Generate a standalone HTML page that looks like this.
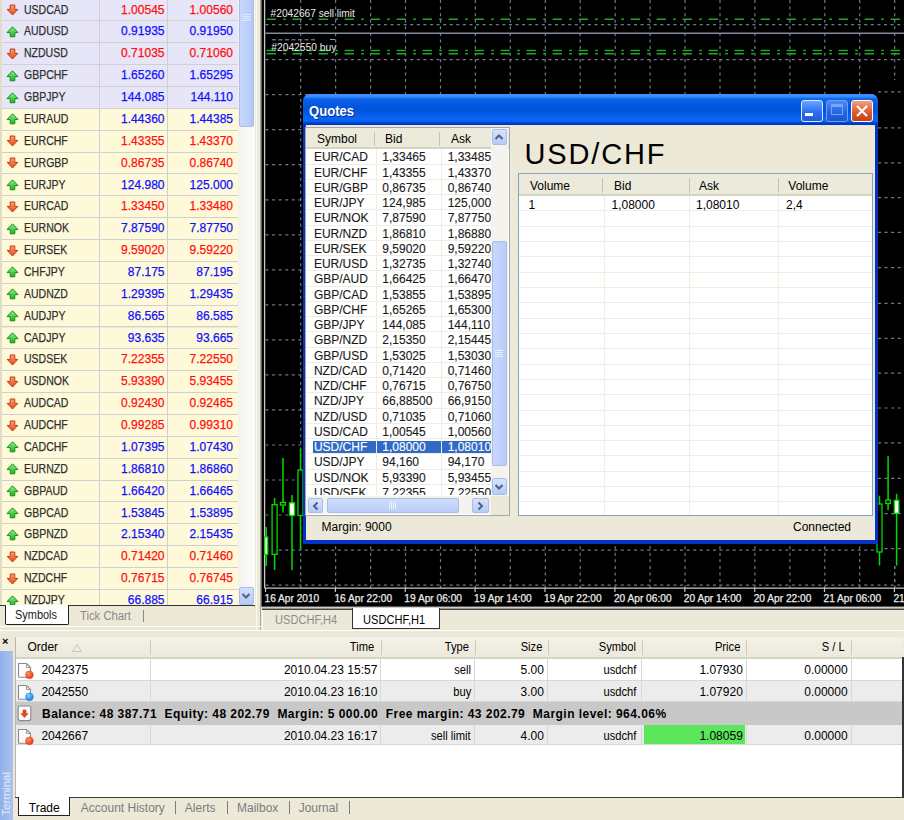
<!DOCTYPE html>
<html><head><meta charset="utf-8"><title>MT</title>
<style>
*{margin:0;padding:0;box-sizing:border-box}
html,body{width:904px;height:820px;overflow:hidden;background:#ece9d8;font-family:"Liberation Sans",sans-serif;font-size:12px;color:#000}
.ab{position:absolute}
.t{position:absolute;white-space:nowrap;line-height:1}
.sl{transform:scaleX(.875);transform-origin:0 0}
.k{-webkit-text-stroke:0.25px currentColor}
.k2{-webkit-text-stroke:0.12px currentColor}
</style></head><body>

<div class="ab" style="left:0;top:0;width:262px;height:632px;background:#ece9d8;overflow:hidden">
<div class="ab" style="left:0;top:0;width:2px;height:605px;background:#e2ddc8"></div>
<div class="ab" style="left:2px;top:0;width:236px;height:605px;overflow:hidden">
<div class="ab" style="left:0;top:-0.55px;width:236px;height:21.87px;background:#e6e6f8;border-bottom:1.2px solid #d0d0d2">
<svg class="ab" style="left:4.2px;top:4.6px" width="13" height="12" viewBox="0 0 13 12"><defs><linearGradient id="gd" x1="0" y1="0" x2="0" y2="1"><stop offset="0" stop-color="#ffa070"/><stop offset="1" stop-color="#e04818"/></linearGradient></defs><path d="M6.5 11 L11.8 5.4 L8.8 5.4 L8.8 1 L4.2 1 L4.2 5.4 L1.2 5.4 Z" fill="url(#gd)" stroke="#c43a12" stroke-width="1"/></svg>
<span class="t sl k" style="left:21.8px;top:4.1px;color:#303030">USDCAD</span>
<span class="t k" style="right:73.5px;top:4.1px;color:#ff1010">1.00545</span>
<span class="t k" style="right:5px;top:4.1px;color:#ff1010">1.00560</span>
</div>
<div class="ab" style="left:0;top:21.32px;width:236px;height:21.87px;background:#e6e6f8;border-bottom:1.2px solid #d0d0d2">
<svg class="ab" style="left:4.2px;top:4.6px" width="13" height="12" viewBox="0 0 13 12"><defs><linearGradient id="gu" x1="0" y1="0" x2="0" y2="1"><stop offset="0" stop-color="#8cf08c"/><stop offset="1" stop-color="#20b020"/></linearGradient></defs><path d="M6.5 0.8 L12 6.6 L8.8 6.6 L8.8 10.8 L4.2 10.8 L4.2 6.6 L1 6.6 Z" fill="url(#gu)" stroke="#15901a" stroke-width="1"/></svg>
<span class="t sl k" style="left:21.8px;top:4.1px;color:#303030">AUDUSD</span>
<span class="t k" style="right:73.5px;top:4.1px;color:#1010ff">0.91935</span>
<span class="t k" style="right:5px;top:4.1px;color:#1010ff">0.91950</span>
</div>
<div class="ab" style="left:0;top:43.19px;width:236px;height:21.87px;background:#e6e6f8;border-bottom:1.2px solid #d0d0d2">
<svg class="ab" style="left:4.2px;top:4.6px" width="13" height="12" viewBox="0 0 13 12"><defs><linearGradient id="gd" x1="0" y1="0" x2="0" y2="1"><stop offset="0" stop-color="#ffa070"/><stop offset="1" stop-color="#e04818"/></linearGradient></defs><path d="M6.5 11 L11.8 5.4 L8.8 5.4 L8.8 1 L4.2 1 L4.2 5.4 L1.2 5.4 Z" fill="url(#gd)" stroke="#c43a12" stroke-width="1"/></svg>
<span class="t sl k" style="left:21.8px;top:4.1px;color:#303030">NZDUSD</span>
<span class="t k" style="right:73.5px;top:4.1px;color:#ff1010">0.71035</span>
<span class="t k" style="right:5px;top:4.1px;color:#ff1010">0.71060</span>
</div>
<div class="ab" style="left:0;top:65.06px;width:236px;height:21.87px;background:#e6e6f8;border-bottom:1.2px solid #d0d0d2">
<svg class="ab" style="left:4.2px;top:4.6px" width="13" height="12" viewBox="0 0 13 12"><defs><linearGradient id="gu" x1="0" y1="0" x2="0" y2="1"><stop offset="0" stop-color="#8cf08c"/><stop offset="1" stop-color="#20b020"/></linearGradient></defs><path d="M6.5 0.8 L12 6.6 L8.8 6.6 L8.8 10.8 L4.2 10.8 L4.2 6.6 L1 6.6 Z" fill="url(#gu)" stroke="#15901a" stroke-width="1"/></svg>
<span class="t sl k" style="left:21.8px;top:4.1px;color:#303030">GBPCHF</span>
<span class="t k" style="right:73.5px;top:4.1px;color:#1010ff">1.65260</span>
<span class="t k" style="right:5px;top:4.1px;color:#1010ff">1.65295</span>
</div>
<div class="ab" style="left:0;top:86.93px;width:236px;height:21.87px;background:#e6e6f8;border-bottom:1.2px solid #d0d0d2">
<svg class="ab" style="left:4.2px;top:4.6px" width="13" height="12" viewBox="0 0 13 12"><defs><linearGradient id="gu" x1="0" y1="0" x2="0" y2="1"><stop offset="0" stop-color="#8cf08c"/><stop offset="1" stop-color="#20b020"/></linearGradient></defs><path d="M6.5 0.8 L12 6.6 L8.8 6.6 L8.8 10.8 L4.2 10.8 L4.2 6.6 L1 6.6 Z" fill="url(#gu)" stroke="#15901a" stroke-width="1"/></svg>
<span class="t sl k" style="left:21.8px;top:4.1px;color:#303030">GBPJPY</span>
<span class="t k" style="right:73.5px;top:4.1px;color:#1010ff">144.085</span>
<span class="t k" style="right:5px;top:4.1px;color:#1010ff">144.110</span>
</div>
<div class="ab" style="left:0;top:108.80px;width:236px;height:21.87px;background:#fefad9;border-bottom:1.2px solid #d0d0d2">
<svg class="ab" style="left:4.2px;top:4.6px" width="13" height="12" viewBox="0 0 13 12"><defs><linearGradient id="gu" x1="0" y1="0" x2="0" y2="1"><stop offset="0" stop-color="#8cf08c"/><stop offset="1" stop-color="#20b020"/></linearGradient></defs><path d="M6.5 0.8 L12 6.6 L8.8 6.6 L8.8 10.8 L4.2 10.8 L4.2 6.6 L1 6.6 Z" fill="url(#gu)" stroke="#15901a" stroke-width="1"/></svg>
<span class="t sl k" style="left:21.8px;top:4.1px;color:#303030">EURAUD</span>
<span class="t k" style="right:73.5px;top:4.1px;color:#1010ff">1.44360</span>
<span class="t k" style="right:5px;top:4.1px;color:#1010ff">1.44385</span>
</div>
<div class="ab" style="left:0;top:130.67px;width:236px;height:21.87px;background:#fefad9;border-bottom:1.2px solid #d0d0d2">
<svg class="ab" style="left:4.2px;top:4.6px" width="13" height="12" viewBox="0 0 13 12"><defs><linearGradient id="gd" x1="0" y1="0" x2="0" y2="1"><stop offset="0" stop-color="#ffa070"/><stop offset="1" stop-color="#e04818"/></linearGradient></defs><path d="M6.5 11 L11.8 5.4 L8.8 5.4 L8.8 1 L4.2 1 L4.2 5.4 L1.2 5.4 Z" fill="url(#gd)" stroke="#c43a12" stroke-width="1"/></svg>
<span class="t sl k" style="left:21.8px;top:4.1px;color:#303030">EURCHF</span>
<span class="t k" style="right:73.5px;top:4.1px;color:#ff1010">1.43355</span>
<span class="t k" style="right:5px;top:4.1px;color:#ff1010">1.43370</span>
</div>
<div class="ab" style="left:0;top:152.54px;width:236px;height:21.87px;background:#fefad9;border-bottom:1.2px solid #d0d0d2">
<svg class="ab" style="left:4.2px;top:4.6px" width="13" height="12" viewBox="0 0 13 12"><defs><linearGradient id="gd" x1="0" y1="0" x2="0" y2="1"><stop offset="0" stop-color="#ffa070"/><stop offset="1" stop-color="#e04818"/></linearGradient></defs><path d="M6.5 11 L11.8 5.4 L8.8 5.4 L8.8 1 L4.2 1 L4.2 5.4 L1.2 5.4 Z" fill="url(#gd)" stroke="#c43a12" stroke-width="1"/></svg>
<span class="t sl k" style="left:21.8px;top:4.1px;color:#303030">EURGBP</span>
<span class="t k" style="right:73.5px;top:4.1px;color:#ff1010">0.86735</span>
<span class="t k" style="right:5px;top:4.1px;color:#ff1010">0.86740</span>
</div>
<div class="ab" style="left:0;top:174.41px;width:236px;height:21.87px;background:#fefad9;border-bottom:1.2px solid #d0d0d2">
<svg class="ab" style="left:4.2px;top:4.6px" width="13" height="12" viewBox="0 0 13 12"><defs><linearGradient id="gu" x1="0" y1="0" x2="0" y2="1"><stop offset="0" stop-color="#8cf08c"/><stop offset="1" stop-color="#20b020"/></linearGradient></defs><path d="M6.5 0.8 L12 6.6 L8.8 6.6 L8.8 10.8 L4.2 10.8 L4.2 6.6 L1 6.6 Z" fill="url(#gu)" stroke="#15901a" stroke-width="1"/></svg>
<span class="t sl k" style="left:21.8px;top:4.1px;color:#303030">EURJPY</span>
<span class="t k" style="right:73.5px;top:4.1px;color:#1010ff">124.980</span>
<span class="t k" style="right:5px;top:4.1px;color:#1010ff">125.000</span>
</div>
<div class="ab" style="left:0;top:196.28px;width:236px;height:21.87px;background:#fefad9;border-bottom:1.2px solid #d0d0d2">
<svg class="ab" style="left:4.2px;top:4.6px" width="13" height="12" viewBox="0 0 13 12"><defs><linearGradient id="gd" x1="0" y1="0" x2="0" y2="1"><stop offset="0" stop-color="#ffa070"/><stop offset="1" stop-color="#e04818"/></linearGradient></defs><path d="M6.5 11 L11.8 5.4 L8.8 5.4 L8.8 1 L4.2 1 L4.2 5.4 L1.2 5.4 Z" fill="url(#gd)" stroke="#c43a12" stroke-width="1"/></svg>
<span class="t sl k" style="left:21.8px;top:4.1px;color:#303030">EURCAD</span>
<span class="t k" style="right:73.5px;top:4.1px;color:#ff1010">1.33450</span>
<span class="t k" style="right:5px;top:4.1px;color:#ff1010">1.33480</span>
</div>
<div class="ab" style="left:0;top:218.15px;width:236px;height:21.87px;background:#fefad9;border-bottom:1.2px solid #d0d0d2">
<svg class="ab" style="left:4.2px;top:4.6px" width="13" height="12" viewBox="0 0 13 12"><defs><linearGradient id="gu" x1="0" y1="0" x2="0" y2="1"><stop offset="0" stop-color="#8cf08c"/><stop offset="1" stop-color="#20b020"/></linearGradient></defs><path d="M6.5 0.8 L12 6.6 L8.8 6.6 L8.8 10.8 L4.2 10.8 L4.2 6.6 L1 6.6 Z" fill="url(#gu)" stroke="#15901a" stroke-width="1"/></svg>
<span class="t sl k" style="left:21.8px;top:4.1px;color:#303030">EURNOK</span>
<span class="t k" style="right:73.5px;top:4.1px;color:#1010ff">7.87590</span>
<span class="t k" style="right:5px;top:4.1px;color:#1010ff">7.87750</span>
</div>
<div class="ab" style="left:0;top:240.02px;width:236px;height:21.87px;background:#fefad9;border-bottom:1.2px solid #d0d0d2">
<svg class="ab" style="left:4.2px;top:4.6px" width="13" height="12" viewBox="0 0 13 12"><defs><linearGradient id="gd" x1="0" y1="0" x2="0" y2="1"><stop offset="0" stop-color="#ffa070"/><stop offset="1" stop-color="#e04818"/></linearGradient></defs><path d="M6.5 11 L11.8 5.4 L8.8 5.4 L8.8 1 L4.2 1 L4.2 5.4 L1.2 5.4 Z" fill="url(#gd)" stroke="#c43a12" stroke-width="1"/></svg>
<span class="t sl k" style="left:21.8px;top:4.1px;color:#303030">EURSEK</span>
<span class="t k" style="right:73.5px;top:4.1px;color:#ff1010">9.59020</span>
<span class="t k" style="right:5px;top:4.1px;color:#ff1010">9.59220</span>
</div>
<div class="ab" style="left:0;top:261.89px;width:236px;height:21.87px;background:#fefad9;border-bottom:1.2px solid #d0d0d2">
<svg class="ab" style="left:4.2px;top:4.6px" width="13" height="12" viewBox="0 0 13 12"><defs><linearGradient id="gu" x1="0" y1="0" x2="0" y2="1"><stop offset="0" stop-color="#8cf08c"/><stop offset="1" stop-color="#20b020"/></linearGradient></defs><path d="M6.5 0.8 L12 6.6 L8.8 6.6 L8.8 10.8 L4.2 10.8 L4.2 6.6 L1 6.6 Z" fill="url(#gu)" stroke="#15901a" stroke-width="1"/></svg>
<span class="t sl k" style="left:21.8px;top:4.1px;color:#303030">CHFJPY</span>
<span class="t k" style="right:73.5px;top:4.1px;color:#1010ff">87.175</span>
<span class="t k" style="right:5px;top:4.1px;color:#1010ff">87.195</span>
</div>
<div class="ab" style="left:0;top:283.76px;width:236px;height:21.87px;background:#fefad9;border-bottom:1.2px solid #d0d0d2">
<svg class="ab" style="left:4.2px;top:4.6px" width="13" height="12" viewBox="0 0 13 12"><defs><linearGradient id="gu" x1="0" y1="0" x2="0" y2="1"><stop offset="0" stop-color="#8cf08c"/><stop offset="1" stop-color="#20b020"/></linearGradient></defs><path d="M6.5 0.8 L12 6.6 L8.8 6.6 L8.8 10.8 L4.2 10.8 L4.2 6.6 L1 6.6 Z" fill="url(#gu)" stroke="#15901a" stroke-width="1"/></svg>
<span class="t sl k" style="left:21.8px;top:4.1px;color:#303030">AUDNZD</span>
<span class="t k" style="right:73.5px;top:4.1px;color:#1010ff">1.29395</span>
<span class="t k" style="right:5px;top:4.1px;color:#1010ff">1.29435</span>
</div>
<div class="ab" style="left:0;top:305.63px;width:236px;height:21.87px;background:#fefad9;border-bottom:1.2px solid #d0d0d2">
<svg class="ab" style="left:4.2px;top:4.6px" width="13" height="12" viewBox="0 0 13 12"><defs><linearGradient id="gu" x1="0" y1="0" x2="0" y2="1"><stop offset="0" stop-color="#8cf08c"/><stop offset="1" stop-color="#20b020"/></linearGradient></defs><path d="M6.5 0.8 L12 6.6 L8.8 6.6 L8.8 10.8 L4.2 10.8 L4.2 6.6 L1 6.6 Z" fill="url(#gu)" stroke="#15901a" stroke-width="1"/></svg>
<span class="t sl k" style="left:21.8px;top:4.1px;color:#303030">AUDJPY</span>
<span class="t k" style="right:73.5px;top:4.1px;color:#1010ff">86.565</span>
<span class="t k" style="right:5px;top:4.1px;color:#1010ff">86.585</span>
</div>
<div class="ab" style="left:0;top:327.50px;width:236px;height:21.87px;background:#fefad9;border-bottom:1.2px solid #d0d0d2">
<svg class="ab" style="left:4.2px;top:4.6px" width="13" height="12" viewBox="0 0 13 12"><defs><linearGradient id="gu" x1="0" y1="0" x2="0" y2="1"><stop offset="0" stop-color="#8cf08c"/><stop offset="1" stop-color="#20b020"/></linearGradient></defs><path d="M6.5 0.8 L12 6.6 L8.8 6.6 L8.8 10.8 L4.2 10.8 L4.2 6.6 L1 6.6 Z" fill="url(#gu)" stroke="#15901a" stroke-width="1"/></svg>
<span class="t sl k" style="left:21.8px;top:4.1px;color:#303030">CADJPY</span>
<span class="t k" style="right:73.5px;top:4.1px;color:#1010ff">93.635</span>
<span class="t k" style="right:5px;top:4.1px;color:#1010ff">93.665</span>
</div>
<div class="ab" style="left:0;top:349.37px;width:236px;height:21.87px;background:#fefad9;border-bottom:1.2px solid #d0d0d2">
<svg class="ab" style="left:4.2px;top:4.6px" width="13" height="12" viewBox="0 0 13 12"><defs><linearGradient id="gd" x1="0" y1="0" x2="0" y2="1"><stop offset="0" stop-color="#ffa070"/><stop offset="1" stop-color="#e04818"/></linearGradient></defs><path d="M6.5 11 L11.8 5.4 L8.8 5.4 L8.8 1 L4.2 1 L4.2 5.4 L1.2 5.4 Z" fill="url(#gd)" stroke="#c43a12" stroke-width="1"/></svg>
<span class="t sl k" style="left:21.8px;top:4.1px;color:#303030">USDSEK</span>
<span class="t k" style="right:73.5px;top:4.1px;color:#ff1010">7.22355</span>
<span class="t k" style="right:5px;top:4.1px;color:#ff1010">7.22550</span>
</div>
<div class="ab" style="left:0;top:371.24px;width:236px;height:21.87px;background:#fefad9;border-bottom:1.2px solid #d0d0d2">
<svg class="ab" style="left:4.2px;top:4.6px" width="13" height="12" viewBox="0 0 13 12"><defs><linearGradient id="gd" x1="0" y1="0" x2="0" y2="1"><stop offset="0" stop-color="#ffa070"/><stop offset="1" stop-color="#e04818"/></linearGradient></defs><path d="M6.5 11 L11.8 5.4 L8.8 5.4 L8.8 1 L4.2 1 L4.2 5.4 L1.2 5.4 Z" fill="url(#gd)" stroke="#c43a12" stroke-width="1"/></svg>
<span class="t sl k" style="left:21.8px;top:4.1px;color:#303030">USDNOK</span>
<span class="t k" style="right:73.5px;top:4.1px;color:#ff1010">5.93390</span>
<span class="t k" style="right:5px;top:4.1px;color:#ff1010">5.93455</span>
</div>
<div class="ab" style="left:0;top:393.11px;width:236px;height:21.87px;background:#fefad9;border-bottom:1.2px solid #d0d0d2">
<svg class="ab" style="left:4.2px;top:4.6px" width="13" height="12" viewBox="0 0 13 12"><defs><linearGradient id="gd" x1="0" y1="0" x2="0" y2="1"><stop offset="0" stop-color="#ffa070"/><stop offset="1" stop-color="#e04818"/></linearGradient></defs><path d="M6.5 11 L11.8 5.4 L8.8 5.4 L8.8 1 L4.2 1 L4.2 5.4 L1.2 5.4 Z" fill="url(#gd)" stroke="#c43a12" stroke-width="1"/></svg>
<span class="t sl k" style="left:21.8px;top:4.1px;color:#303030">AUDCAD</span>
<span class="t k" style="right:73.5px;top:4.1px;color:#ff1010">0.92430</span>
<span class="t k" style="right:5px;top:4.1px;color:#ff1010">0.92465</span>
</div>
<div class="ab" style="left:0;top:414.98px;width:236px;height:21.87px;background:#fefad9;border-bottom:1.2px solid #d0d0d2">
<svg class="ab" style="left:4.2px;top:4.6px" width="13" height="12" viewBox="0 0 13 12"><defs><linearGradient id="gd" x1="0" y1="0" x2="0" y2="1"><stop offset="0" stop-color="#ffa070"/><stop offset="1" stop-color="#e04818"/></linearGradient></defs><path d="M6.5 11 L11.8 5.4 L8.8 5.4 L8.8 1 L4.2 1 L4.2 5.4 L1.2 5.4 Z" fill="url(#gd)" stroke="#c43a12" stroke-width="1"/></svg>
<span class="t sl k" style="left:21.8px;top:4.1px;color:#303030">AUDCHF</span>
<span class="t k" style="right:73.5px;top:4.1px;color:#ff1010">0.99285</span>
<span class="t k" style="right:5px;top:4.1px;color:#ff1010">0.99310</span>
</div>
<div class="ab" style="left:0;top:436.85px;width:236px;height:21.87px;background:#fefad9;border-bottom:1.2px solid #d0d0d2">
<svg class="ab" style="left:4.2px;top:4.6px" width="13" height="12" viewBox="0 0 13 12"><defs><linearGradient id="gu" x1="0" y1="0" x2="0" y2="1"><stop offset="0" stop-color="#8cf08c"/><stop offset="1" stop-color="#20b020"/></linearGradient></defs><path d="M6.5 0.8 L12 6.6 L8.8 6.6 L8.8 10.8 L4.2 10.8 L4.2 6.6 L1 6.6 Z" fill="url(#gu)" stroke="#15901a" stroke-width="1"/></svg>
<span class="t sl k" style="left:21.8px;top:4.1px;color:#303030">CADCHF</span>
<span class="t k" style="right:73.5px;top:4.1px;color:#1010ff">1.07395</span>
<span class="t k" style="right:5px;top:4.1px;color:#1010ff">1.07430</span>
</div>
<div class="ab" style="left:0;top:458.72px;width:236px;height:21.87px;background:#fefad9;border-bottom:1.2px solid #d0d0d2">
<svg class="ab" style="left:4.2px;top:4.6px" width="13" height="12" viewBox="0 0 13 12"><defs><linearGradient id="gu" x1="0" y1="0" x2="0" y2="1"><stop offset="0" stop-color="#8cf08c"/><stop offset="1" stop-color="#20b020"/></linearGradient></defs><path d="M6.5 0.8 L12 6.6 L8.8 6.6 L8.8 10.8 L4.2 10.8 L4.2 6.6 L1 6.6 Z" fill="url(#gu)" stroke="#15901a" stroke-width="1"/></svg>
<span class="t sl k" style="left:21.8px;top:4.1px;color:#303030">EURNZD</span>
<span class="t k" style="right:73.5px;top:4.1px;color:#1010ff">1.86810</span>
<span class="t k" style="right:5px;top:4.1px;color:#1010ff">1.86860</span>
</div>
<div class="ab" style="left:0;top:480.59px;width:236px;height:21.87px;background:#fefad9;border-bottom:1.2px solid #d0d0d2">
<svg class="ab" style="left:4.2px;top:4.6px" width="13" height="12" viewBox="0 0 13 12"><defs><linearGradient id="gu" x1="0" y1="0" x2="0" y2="1"><stop offset="0" stop-color="#8cf08c"/><stop offset="1" stop-color="#20b020"/></linearGradient></defs><path d="M6.5 0.8 L12 6.6 L8.8 6.6 L8.8 10.8 L4.2 10.8 L4.2 6.6 L1 6.6 Z" fill="url(#gu)" stroke="#15901a" stroke-width="1"/></svg>
<span class="t sl k" style="left:21.8px;top:4.1px;color:#303030">GBPAUD</span>
<span class="t k" style="right:73.5px;top:4.1px;color:#1010ff">1.66420</span>
<span class="t k" style="right:5px;top:4.1px;color:#1010ff">1.66465</span>
</div>
<div class="ab" style="left:0;top:502.46px;width:236px;height:21.87px;background:#fefad9;border-bottom:1.2px solid #d0d0d2">
<svg class="ab" style="left:4.2px;top:4.6px" width="13" height="12" viewBox="0 0 13 12"><defs><linearGradient id="gu" x1="0" y1="0" x2="0" y2="1"><stop offset="0" stop-color="#8cf08c"/><stop offset="1" stop-color="#20b020"/></linearGradient></defs><path d="M6.5 0.8 L12 6.6 L8.8 6.6 L8.8 10.8 L4.2 10.8 L4.2 6.6 L1 6.6 Z" fill="url(#gu)" stroke="#15901a" stroke-width="1"/></svg>
<span class="t sl k" style="left:21.8px;top:4.1px;color:#303030">GBPCAD</span>
<span class="t k" style="right:73.5px;top:4.1px;color:#1010ff">1.53845</span>
<span class="t k" style="right:5px;top:4.1px;color:#1010ff">1.53895</span>
</div>
<div class="ab" style="left:0;top:524.33px;width:236px;height:21.87px;background:#fefad9;border-bottom:1.2px solid #d0d0d2">
<svg class="ab" style="left:4.2px;top:4.6px" width="13" height="12" viewBox="0 0 13 12"><defs><linearGradient id="gu" x1="0" y1="0" x2="0" y2="1"><stop offset="0" stop-color="#8cf08c"/><stop offset="1" stop-color="#20b020"/></linearGradient></defs><path d="M6.5 0.8 L12 6.6 L8.8 6.6 L8.8 10.8 L4.2 10.8 L4.2 6.6 L1 6.6 Z" fill="url(#gu)" stroke="#15901a" stroke-width="1"/></svg>
<span class="t sl k" style="left:21.8px;top:4.1px;color:#303030">GBPNZD</span>
<span class="t k" style="right:73.5px;top:4.1px;color:#1010ff">2.15340</span>
<span class="t k" style="right:5px;top:4.1px;color:#1010ff">2.15435</span>
</div>
<div class="ab" style="left:0;top:546.20px;width:236px;height:21.87px;background:#fefad9;border-bottom:1.2px solid #d0d0d2">
<svg class="ab" style="left:4.2px;top:4.6px" width="13" height="12" viewBox="0 0 13 12"><defs><linearGradient id="gd" x1="0" y1="0" x2="0" y2="1"><stop offset="0" stop-color="#ffa070"/><stop offset="1" stop-color="#e04818"/></linearGradient></defs><path d="M6.5 11 L11.8 5.4 L8.8 5.4 L8.8 1 L4.2 1 L4.2 5.4 L1.2 5.4 Z" fill="url(#gd)" stroke="#c43a12" stroke-width="1"/></svg>
<span class="t sl k" style="left:21.8px;top:4.1px;color:#303030">NZDCAD</span>
<span class="t k" style="right:73.5px;top:4.1px;color:#ff1010">0.71420</span>
<span class="t k" style="right:5px;top:4.1px;color:#ff1010">0.71460</span>
</div>
<div class="ab" style="left:0;top:568.07px;width:236px;height:21.87px;background:#fefad9;border-bottom:1.2px solid #d0d0d2">
<svg class="ab" style="left:4.2px;top:4.6px" width="13" height="12" viewBox="0 0 13 12"><defs><linearGradient id="gd" x1="0" y1="0" x2="0" y2="1"><stop offset="0" stop-color="#ffa070"/><stop offset="1" stop-color="#e04818"/></linearGradient></defs><path d="M6.5 11 L11.8 5.4 L8.8 5.4 L8.8 1 L4.2 1 L4.2 5.4 L1.2 5.4 Z" fill="url(#gd)" stroke="#c43a12" stroke-width="1"/></svg>
<span class="t sl k" style="left:21.8px;top:4.1px;color:#303030">NZDCHF</span>
<span class="t k" style="right:73.5px;top:4.1px;color:#ff1010">0.76715</span>
<span class="t k" style="right:5px;top:4.1px;color:#ff1010">0.76745</span>
</div>
<div class="ab" style="left:0;top:589.94px;width:236px;height:21.87px;background:#fefad9;border-bottom:1.2px solid #d0d0d2">
<svg class="ab" style="left:4.2px;top:4.6px" width="13" height="12" viewBox="0 0 13 12"><defs><linearGradient id="gu" x1="0" y1="0" x2="0" y2="1"><stop offset="0" stop-color="#8cf08c"/><stop offset="1" stop-color="#20b020"/></linearGradient></defs><path d="M6.5 0.8 L12 6.6 L8.8 6.6 L8.8 10.8 L4.2 10.8 L4.2 6.6 L1 6.6 Z" fill="url(#gu)" stroke="#15901a" stroke-width="1"/></svg>
<span class="t sl k" style="left:21.8px;top:4.1px;color:#303030">NZDJPY</span>
<span class="t k" style="right:73.5px;top:4.1px;color:#1010ff">66.885</span>
<span class="t k" style="right:5px;top:4.1px;color:#1010ff">66.915</span>
</div>
<div class="ab" style="left:96.8px;top:0;width:1.4px;height:605px;background:#d0d0d2"></div>
<div class="ab" style="left:164.6px;top:0;width:1.4px;height:605px;background:#d0d0d2"></div>
</div>
<div class="ab" style="left:237.5px;top:0;width:17px;height:605px;background:linear-gradient(90deg,#f3f2ec,#fdfdfb)"></div>
<div class="ab" style="left:255.6px;top:0;width:1px;height:630px;background:#fbfaf4"></div>
<div class="ab" style="left:259.8px;top:0;width:1.4px;height:631px;background:#a9a89e"></div>
<div class="ab" style="left:238.5px;top:-2px;width:15px;height:129px;background:linear-gradient(90deg,#c8d8fb,#bcd0fa 60%,#b0c6f6);border:1px solid #a9bde8;border-radius:2px"></div>
<div class="ab" style="left:242.5px;top:13.5px;width:8px;height:1px;background:#e0e9fd;box-shadow:0 2px 0 #e0e9fd,0 4px 0 #e0e9fd,0 6px 0 #e0e9fd"></div>
<div class="ab" style="left:238.5px;top:587px;width:15px;height:17.5px;background:linear-gradient(180deg,#d2e0fd,#b4c9f6);border:1px solid #a9bde8;border-radius:2px"></div>
<svg class="ab" style="left:241px;top:591.5px" width="10" height="8" viewBox="0 0 10 8"><path d="M1.5 2 L5 5.5 L8.5 2" stroke="#4d6185" stroke-width="2" fill="none"/></svg>
<div class="ab" style="left:0;top:605px;width:255px;height:1px;background:#333"></div>
<div class="ab" style="left:4.5px;top:605px;width:64px;height:19.5px;background:#fff;border:1px solid #222;border-top:none;border-radius:0 0 2px 2px"></div>
<span class="t" style="left:15px;top:609px;font-size:12px;color:#222;transform:scaleX(.913);transform-origin:0 0">Symbols</span>
<span class="t" style="left:79.6px;top:610px;font-size:12px;color:#8a8a8a;transform:scaleX(.94);transform-origin:0 0">Tick Chart</span>
<div class="ab" style="left:143px;top:610px;width:1px;height:12px;background:#8a8a8a"></div>
</div>
<svg class="ab" style="left:0;top:0" width="904" height="610" viewBox="0 0 904 610">
<rect x="261.4" y="0" width="643" height="606.8" fill="#000"/>
<line x1="264.6" y1="0" x2="264.6" y2="588" stroke="#c8c8c8" stroke-width="1.3"/>
<line x1="265.5" y1="24.6" x2="904" y2="24.6" stroke="#6e7b89" stroke-width="1.2" stroke-dasharray="3 3.58"/>
<line x1="265.5" y1="59.6" x2="904" y2="59.6" stroke="#6e7b89" stroke-width="1.2" stroke-dasharray="3 3.58"/>
<line x1="265.5" y1="94.7" x2="904" y2="94.7" stroke="#6e7b89" stroke-width="1.2" stroke-dasharray="3 3.58"/>
<line x1="265.5" y1="129.7" x2="904" y2="129.7" stroke="#6e7b89" stroke-width="1.2" stroke-dasharray="3 3.58"/>
<line x1="265.5" y1="164.7" x2="904" y2="164.7" stroke="#6e7b89" stroke-width="1.2" stroke-dasharray="3 3.58"/>
<line x1="265.5" y1="199.8" x2="904" y2="199.8" stroke="#6e7b89" stroke-width="1.2" stroke-dasharray="3 3.58"/>
<line x1="265.5" y1="234.8" x2="904" y2="234.8" stroke="#6e7b89" stroke-width="1.2" stroke-dasharray="3 3.58"/>
<line x1="265.5" y1="269.8" x2="904" y2="269.8" stroke="#6e7b89" stroke-width="1.2" stroke-dasharray="3 3.58"/>
<line x1="265.5" y1="304.8" x2="904" y2="304.8" stroke="#6e7b89" stroke-width="1.2" stroke-dasharray="3 3.58"/>
<line x1="265.5" y1="339.9" x2="904" y2="339.9" stroke="#6e7b89" stroke-width="1.2" stroke-dasharray="3 3.58"/>
<line x1="265.5" y1="374.9" x2="904" y2="374.9" stroke="#6e7b89" stroke-width="1.2" stroke-dasharray="3 3.58"/>
<line x1="265.5" y1="409.9" x2="904" y2="409.9" stroke="#6e7b89" stroke-width="1.2" stroke-dasharray="3 3.58"/>
<line x1="265.5" y1="445.0" x2="904" y2="445.0" stroke="#6e7b89" stroke-width="1.2" stroke-dasharray="3 3.58"/>
<line x1="265.5" y1="480.0" x2="904" y2="480.0" stroke="#6e7b89" stroke-width="1.2" stroke-dasharray="3 3.58"/>
<line x1="265.5" y1="515.0" x2="904" y2="515.0" stroke="#6e7b89" stroke-width="1.2" stroke-dasharray="3 3.58"/>
<line x1="265.5" y1="550.1" x2="904" y2="550.1" stroke="#6e7b89" stroke-width="1.2" stroke-dasharray="3 3.58"/>
<line x1="265.5" y1="585.1" x2="904" y2="585.1" stroke="#6e7b89" stroke-width="1.2" stroke-dasharray="3 3.58"/>
<line x1="300.7" y1="0" x2="300.7" y2="588" stroke="#6e7b89" stroke-width="1.2" stroke-dasharray="3 3.58"/>
<line x1="335.6" y1="0" x2="335.6" y2="588" stroke="#6e7b89" stroke-width="1.2" stroke-dasharray="3 3.58"/>
<line x1="370.6" y1="0" x2="370.6" y2="588" stroke="#6e7b89" stroke-width="1.2" stroke-dasharray="3 3.58"/>
<line x1="405.5" y1="0" x2="405.5" y2="588" stroke="#6e7b89" stroke-width="1.2" stroke-dasharray="3 3.58"/>
<line x1="440.5" y1="0" x2="440.5" y2="588" stroke="#6e7b89" stroke-width="1.2" stroke-dasharray="3 3.58"/>
<line x1="475.4" y1="0" x2="475.4" y2="588" stroke="#6e7b89" stroke-width="1.2" stroke-dasharray="3 3.58"/>
<line x1="510.3" y1="0" x2="510.3" y2="588" stroke="#6e7b89" stroke-width="1.2" stroke-dasharray="3 3.58"/>
<line x1="545.3" y1="0" x2="545.3" y2="588" stroke="#6e7b89" stroke-width="1.2" stroke-dasharray="3 3.58"/>
<line x1="580.2" y1="0" x2="580.2" y2="588" stroke="#6e7b89" stroke-width="1.2" stroke-dasharray="3 3.58"/>
<line x1="615.2" y1="0" x2="615.2" y2="588" stroke="#6e7b89" stroke-width="1.2" stroke-dasharray="3 3.58"/>
<line x1="650.1" y1="0" x2="650.1" y2="588" stroke="#6e7b89" stroke-width="1.2" stroke-dasharray="3 3.58"/>
<line x1="685.0" y1="0" x2="685.0" y2="588" stroke="#6e7b89" stroke-width="1.2" stroke-dasharray="3 3.58"/>
<line x1="720.0" y1="0" x2="720.0" y2="588" stroke="#6e7b89" stroke-width="1.2" stroke-dasharray="3 3.58"/>
<line x1="754.9" y1="0" x2="754.9" y2="588" stroke="#6e7b89" stroke-width="1.2" stroke-dasharray="3 3.58"/>
<line x1="789.9" y1="0" x2="789.9" y2="588" stroke="#6e7b89" stroke-width="1.2" stroke-dasharray="3 3.58"/>
<line x1="824.8" y1="0" x2="824.8" y2="588" stroke="#6e7b89" stroke-width="1.2" stroke-dasharray="3 3.58"/>
<line x1="859.7" y1="0" x2="859.7" y2="588" stroke="#6e7b89" stroke-width="1.2" stroke-dasharray="3 3.58"/>
<line x1="894.7" y1="0" x2="894.7" y2="588" stroke="#6e7b89" stroke-width="1.2" stroke-dasharray="3 3.58"/>
<line x1="265.5" y1="33.3" x2="904" y2="33.3" stroke="#7f8c99" stroke-width="1.6"/>
<line x1="266.6" y1="19.2" x2="904" y2="19.2" stroke="#1fa82a" stroke-width="1.5" stroke-dasharray="9.3 7.3 2.7 6.7"/>
<line x1="266.6" y1="50.5" x2="904" y2="50.5" stroke="#1fa82a" stroke-width="1.5" stroke-dasharray="9.3 7.3 2.7 6.7" stroke-dashoffset="0"/>
<line x1="266.6" y1="53.8" x2="904" y2="53.8" stroke="#1fa82a" stroke-width="1.5" stroke-dasharray="9.3 7.3 2.7 6.7"/>
<line x1="264.6" y1="588.1" x2="904" y2="588.1" stroke="#c8c8c8" stroke-width="1.4"/>
<line x1="261.4" y1="607.4" x2="904" y2="607.4" stroke="#cfcfcf" stroke-width="1.2"/>
<line x1="262" y1="609.3" x2="904" y2="609.3" stroke="#444" stroke-width="1.7"/>
<line x1="265.5" y1="588" x2="265.5" y2="592" stroke="#c8c8c8" stroke-width="1.2"/>
<text x="264.5" y="601.8" fill="#ececec" stroke="#ececec" stroke-width="0.25" font-size="10.5" font-family="Liberation Sans, sans-serif" textLength="54.7" lengthAdjust="spacingAndGlyphs">16 Apr 2010</text>
<line x1="335.4" y1="588" x2="335.4" y2="592" stroke="#c8c8c8" stroke-width="1.2"/>
<text x="334.4" y="601.8" fill="#ececec" stroke="#ececec" stroke-width="0.25" font-size="10.5" font-family="Liberation Sans, sans-serif" textLength="57.7" lengthAdjust="spacingAndGlyphs">16 Apr 22:00</text>
<line x1="405.3" y1="588" x2="405.3" y2="592" stroke="#c8c8c8" stroke-width="1.2"/>
<text x="404.3" y="601.8" fill="#ececec" stroke="#ececec" stroke-width="0.25" font-size="10.5" font-family="Liberation Sans, sans-serif" textLength="57.7" lengthAdjust="spacingAndGlyphs">19 Apr 06:00</text>
<line x1="475.1" y1="588" x2="475.1" y2="592" stroke="#c8c8c8" stroke-width="1.2"/>
<text x="474.1" y="601.8" fill="#ececec" stroke="#ececec" stroke-width="0.25" font-size="10.5" font-family="Liberation Sans, sans-serif" textLength="57.7" lengthAdjust="spacingAndGlyphs">19 Apr 14:00</text>
<line x1="545.0" y1="588" x2="545.0" y2="592" stroke="#c8c8c8" stroke-width="1.2"/>
<text x="544.0" y="601.8" fill="#ececec" stroke="#ececec" stroke-width="0.25" font-size="10.5" font-family="Liberation Sans, sans-serif" textLength="57.7" lengthAdjust="spacingAndGlyphs">19 Apr 22:00</text>
<line x1="614.9" y1="588" x2="614.9" y2="592" stroke="#c8c8c8" stroke-width="1.2"/>
<text x="613.9" y="601.8" fill="#ececec" stroke="#ececec" stroke-width="0.25" font-size="10.5" font-family="Liberation Sans, sans-serif" textLength="57.7" lengthAdjust="spacingAndGlyphs">20 Apr 06:00</text>
<line x1="684.8" y1="588" x2="684.8" y2="592" stroke="#c8c8c8" stroke-width="1.2"/>
<text x="683.8" y="601.8" fill="#ececec" stroke="#ececec" stroke-width="0.25" font-size="10.5" font-family="Liberation Sans, sans-serif" textLength="57.7" lengthAdjust="spacingAndGlyphs">20 Apr 14:00</text>
<line x1="754.7" y1="588" x2="754.7" y2="592" stroke="#c8c8c8" stroke-width="1.2"/>
<text x="753.7" y="601.8" fill="#ececec" stroke="#ececec" stroke-width="0.25" font-size="10.5" font-family="Liberation Sans, sans-serif" textLength="57.7" lengthAdjust="spacingAndGlyphs">20 Apr 22:00</text>
<line x1="824.5" y1="588" x2="824.5" y2="592" stroke="#c8c8c8" stroke-width="1.2"/>
<text x="823.5" y="601.8" fill="#ececec" stroke="#ececec" stroke-width="0.25" font-size="10.5" font-family="Liberation Sans, sans-serif" textLength="57.7" lengthAdjust="spacingAndGlyphs">21 Apr 06:00</text>
<line x1="894.4" y1="588" x2="894.4" y2="592" stroke="#c8c8c8" stroke-width="1.2"/>
<text x="893.4" y="601.8" fill="#ececec" stroke="#ececec" stroke-width="0.25" font-size="10.5" font-family="Liberation Sans, sans-serif" textLength="57.7" lengthAdjust="spacingAndGlyphs">21 Apr 14:00</text>
<text x="270.6" y="16.8" fill="#e8e8e8" font-size="11" font-family="Liberation Sans, sans-serif" textLength="84.3" lengthAdjust="spacingAndGlyphs">#2042667 sell limit</text>
<line x1="272" y1="39.8" x2="316" y2="39.8" stroke="#9a9a9a" stroke-width="1" stroke-dasharray="4 2.5"/><line x1="330" y1="39.5" x2="335" y2="39.5" stroke="#9a9a9a" stroke-width="1"/>
<text x="271.3" y="51" fill="#e8e8e8" font-size="11" font-family="Liberation Sans, sans-serif" textLength="65" lengthAdjust="spacingAndGlyphs">#2042550 buy</text>
<line x1="266.2" y1="527" x2="266.2" y2="566" stroke="#00dc00" stroke-width="1.5"/>
<rect x="264.7" y="537" width="3" height="17.399999999999977" fill="#fff" stroke="#00dc00" stroke-width="1.3"/>
<line x1="274.6" y1="498" x2="274.6" y2="570" stroke="#00dc00" stroke-width="1.5"/>
<rect x="272.1" y="504.7" width="5" height="49.69999999999999" fill="#000" stroke="#00dc00" stroke-width="1.3"/>
<line x1="283" y1="458" x2="283" y2="512.5" stroke="#00dc00" stroke-width="1.5"/>
<rect x="280.5" y="502.5" width="5" height="2.5" fill="#000" stroke="#00dc00" stroke-width="1.3"/>
<line x1="292" y1="495" x2="292" y2="570" stroke="#00dc00" stroke-width="1.5"/>
<rect x="289.5" y="502.8" width="5" height="12.699999999999989" fill="#fff" stroke="#00dc00" stroke-width="1.3"/>
<line x1="300.5" y1="449" x2="300.5" y2="549.5" stroke="#00dc00" stroke-width="1.5"/>
<rect x="298.0" y="470" width="5" height="45.5" fill="#000" stroke="#00dc00" stroke-width="1.3"/>
<rect x="877" y="80" width="27" height="486" fill="#000"/>
<line x1="878" y1="91.8" x2="904" y2="91.8" stroke="#6e7b89" stroke-width="1.2" stroke-dasharray="3 3.58"/>
<line x1="878" y1="127.8" x2="904" y2="127.8" stroke="#6e7b89" stroke-width="1.2" stroke-dasharray="3 3.58"/>
<line x1="878" y1="162.8" x2="904" y2="162.8" stroke="#6e7b89" stroke-width="1.2" stroke-dasharray="3 3.58"/>
<line x1="878" y1="197.6" x2="904" y2="197.6" stroke="#6e7b89" stroke-width="1.2" stroke-dasharray="3 3.58"/>
<line x1="878" y1="232.4" x2="904" y2="232.4" stroke="#6e7b89" stroke-width="1.2" stroke-dasharray="3 3.58"/>
<line x1="878" y1="267.6" x2="904" y2="267.6" stroke="#6e7b89" stroke-width="1.2" stroke-dasharray="3 3.58"/>
<line x1="878" y1="303.4" x2="904" y2="303.4" stroke="#6e7b89" stroke-width="1.2" stroke-dasharray="3 3.58"/>
<line x1="878" y1="338.4" x2="904" y2="338.4" stroke="#6e7b89" stroke-width="1.2" stroke-dasharray="3 3.58"/>
<line x1="878" y1="373.2" x2="904" y2="373.2" stroke="#6e7b89" stroke-width="1.2" stroke-dasharray="3 3.58"/>
<line x1="878" y1="408" x2="904" y2="408" stroke="#6e7b89" stroke-width="1.2" stroke-dasharray="3 3.58"/>
<line x1="878" y1="442.8" x2="904" y2="442.8" stroke="#6e7b89" stroke-width="1.2" stroke-dasharray="3 3.58"/>
<line x1="878" y1="478.4" x2="904" y2="478.4" stroke="#6e7b89" stroke-width="1.2" stroke-dasharray="3 3.58"/>
<line x1="878" y1="513.6" x2="904" y2="513.6" stroke="#6e7b89" stroke-width="1.2" stroke-dasharray="3 3.58"/>
<line x1="878" y1="548.6" x2="904" y2="548.6" stroke="#6e7b89" stroke-width="1.2" stroke-dasharray="3 3.58"/>
<line x1="894.7" y1="566" x2="894.7" y2="588" stroke="#6e7b89" stroke-width="1.2" stroke-dasharray="3 3.58"/>
<line x1="879.5" y1="495.7" x2="879.5" y2="565.5" stroke="#00dc00" stroke-width="1.5"/>
<rect x="877.0" y="504" width="5" height="48" fill="#000" stroke="#00dc00" stroke-width="1.3"/>
<line x1="888.1" y1="456.2" x2="888.1" y2="510" stroke="#00dc00" stroke-width="1.5"/>
<rect x="885.85" y="500" width="4.5" height="3.5" fill="#000" stroke="#00dc00" stroke-width="1.3"/>
<line x1="896.6" y1="493.8" x2="896.6" y2="565.6" stroke="#00dc00" stroke-width="1.5"/>
<rect x="894.3000000000001" y="500.3" width="4.6" height="12.999999999999943" fill="#fff" stroke="#00dc00" stroke-width="1.3"/>
</svg>
<div class="ab" style="left:262.4px;top:610px;width:90px;height:20px;background:#ece9d8;border-left:1px solid #fff"></div>
<span class="t" style="left:275.3px;top:613.5px;color:#8c8c8c;transform:scaleX(.923);transform-origin:0 0">USDCHF,H4</span>
<div class="ab" style="left:352.4px;top:608px;width:87.5px;height:21.4px;background:#fff;border:1.5px solid #333;border-top:none"></div>
<span class="t" style="left:362.9px;top:613.5px;transform:scaleX(.923);transform-origin:0 0">USDCHF,H1</span>
<div class="ab" style="left:0;top:630px;width:904px;height:1px;background:#fff"></div>
<div class="ab" style="left:0;top:626px;width:262px;height:1px;background:#fdfdf8"></div>
<span class="t" style="left:2px;top:636px;font-size:11px;font-weight:bold">&#215;</span>
<div class="ab" style="left:0;top:651px;width:13.3px;height:169px;background:linear-gradient(90deg,#8fb0ea,#a8c2f2)"></div>
<span class="t" style="left:-15.8px;top:788px;font-size:11.6px;color:#e4ecfa;transform:rotate(-90deg);transform-origin:center">Terminal</span>
<div class="ab" style="left:15px;top:636.8px;width:888px;height:160.5px;background:#fff;border-left:1px solid #b9b6a6;overflow:hidden">
<div class="ab" style="left:0;top:0;width:888px;height:21.8px;background:linear-gradient(180deg,#f4f2e8,#ebe9dc);border-bottom:2px solid #d8d4c4"></div>
<div class="ab" style="left:134.4px;top:3px;width:1px;height:15px;background:#cdcab8"></div>
<div class="ab" style="left:364.5px;top:3px;width:1px;height:15px;background:#cdcab8"></div>
<div class="ab" style="left:458.5px;top:3px;width:1px;height:15px;background:#cdcab8"></div>
<div class="ab" style="left:531.7px;top:3px;width:1px;height:15px;background:#cdcab8"></div>
<div class="ab" style="left:625.5px;top:3px;width:1px;height:15px;background:#cdcab8"></div>
<div class="ab" style="left:730.1px;top:3px;width:1px;height:15px;background:#cdcab8"></div>
<div class="ab" style="left:835.3px;top:3px;width:1px;height:15px;background:#cdcab8"></div>
<span class="t" style="left:11.4px;top:4.5px">Order</span>
<svg class="ab" style="left:56px;top:7px" width="10" height="8" viewBox="0 0 10 8"><path d="M5 0.5 L9.5 7.5 L0.5 7.5Z" fill="none" stroke="#c9c6b6" stroke-width="1"/></svg>
<span class="t" style="right:528.5px;top:4.5px;transform:scaleX(.93);transform-origin:100% 0">Time</span>
<span class="t" style="right:434.4px;top:4.5px;transform:scaleX(.93);transform-origin:100% 0">Type</span>
<span class="t" style="right:360.7px;top:4.5px;transform:scaleX(.93);transform-origin:100% 0">Size</span>
<span class="t" style="right:267.2px;top:4.5px;transform:scaleX(.93);transform-origin:100% 0">Symbol</span>
<span class="t" style="right:162.4px;top:4.5px;transform:scaleX(.93);transform-origin:100% 0">Price</span>
<span class="t" style="right:58.4px;top:4.5px;transform:scaleX(.93);transform-origin:100% 0">S / L</span>
<div class="ab" style="left:0;top:21.8px;width:888px;height:22.0px;background:#fff;border-bottom:1px solid #d8d8d8"></div>
<div class="ab" style="left:133.8px;top:21.8px;width:1px;height:22.0px;background:#d8d8d8"></div>
<div class="ab" style="left:363.9px;top:21.8px;width:1px;height:22.0px;background:#d8d8d8"></div>
<div class="ab" style="left:457.9px;top:21.8px;width:1px;height:22.0px;background:#d8d8d8"></div>
<div class="ab" style="left:531.1px;top:21.8px;width:1px;height:22.0px;background:#d8d8d8"></div>
<div class="ab" style="left:624.9px;top:21.8px;width:1px;height:22.0px;background:#d8d8d8"></div>
<div class="ab" style="left:729.5px;top:21.8px;width:1px;height:22.0px;background:#d8d8d8"></div>
<div class="ab" style="left:834.7px;top:21.8px;width:1px;height:22.0px;background:#d8d8d8"></div>
<svg class="ab" style="left:1px;top:25.3px" width="18" height="18" viewBox="0 0 18 18"><defs><radialGradient id="b0" cx="0.35" cy="0.3" r="0.7"><stop offset="0" stop-color="#ff9070"/><stop offset="1" stop-color="#e83c10"/></radialGradient></defs><path d="M1.5 1.5 H9.5 L13.5 5.5 V14.5 Q13.5 15.2 12.8 15.2 H2.2 Q1.5 15.2 1.5 14.5Z" fill="#fcfcfc" stroke="#8a8a8a" stroke-width="1.1"/><path d="M9.5 1.5 V5.5 H13.5" fill="none" stroke="#9a9a9a"/><circle cx="12.4" cy="12.8" r="3.9" fill="url(#b0)" stroke="#e83c10" stroke-width="0.5"/></svg>
<span class="t" style="left:25.4px;top:26.8px">2042375</span>
<span class="t" style="right:525.7px;top:26.8px;transform:scaleX(1);transform-origin:100% 0">2010.04.23 15:57</span>
<span class="t" style="right:432.0px;top:26.8px;transform:scaleX(.93);transform-origin:100% 0">sell</span>
<span class="t" style="right:359.2px;top:26.8px;transform:scaleX(1);transform-origin:100% 0">5.00</span>
<span class="t" style="right:266.3px;top:26.8px;transform:scaleX(.93);transform-origin:100% 0">usdchf</span>
<span class="t" style="right:160.2px;top:26.8px;transform:scaleX(1);transform-origin:100% 0">1.07930</span>
<span class="t" style="right:55.4px;top:26.8px;transform:scaleX(1);transform-origin:100% 0">0.00000</span>
<div class="ab" style="left:0;top:43.8px;width:888px;height:21.8px;background:#ececec;border-bottom:1px solid #d8d8d8"></div>
<div class="ab" style="left:133.8px;top:43.8px;width:1px;height:21.8px;background:#d8d8d8"></div>
<div class="ab" style="left:363.9px;top:43.8px;width:1px;height:21.8px;background:#d8d8d8"></div>
<div class="ab" style="left:457.9px;top:43.8px;width:1px;height:21.8px;background:#d8d8d8"></div>
<div class="ab" style="left:531.1px;top:43.8px;width:1px;height:21.8px;background:#d8d8d8"></div>
<div class="ab" style="left:624.9px;top:43.8px;width:1px;height:21.8px;background:#d8d8d8"></div>
<div class="ab" style="left:729.5px;top:43.8px;width:1px;height:21.8px;background:#d8d8d8"></div>
<div class="ab" style="left:834.7px;top:43.8px;width:1px;height:21.8px;background:#d8d8d8"></div>
<svg class="ab" style="left:1px;top:47.3px" width="18" height="18" viewBox="0 0 18 18"><defs><radialGradient id="b1" cx="0.35" cy="0.3" r="0.7"><stop offset="0" stop-color="#90d0ff"/><stop offset="1" stop-color="#1a7ee0"/></radialGradient></defs><path d="M1.5 1.5 H9.5 L13.5 5.5 V14.5 Q13.5 15.2 12.8 15.2 H2.2 Q1.5 15.2 1.5 14.5Z" fill="#fcfcfc" stroke="#8a8a8a" stroke-width="1.1"/><path d="M9.5 1.5 V5.5 H13.5" fill="none" stroke="#9a9a9a"/><circle cx="12.4" cy="12.8" r="3.9" fill="url(#b1)" stroke="#1a7ee0" stroke-width="0.5"/></svg>
<span class="t" style="left:25.4px;top:48.8px">2042550</span>
<span class="t" style="right:525.7px;top:48.8px;transform:scaleX(1);transform-origin:100% 0">2010.04.23 16:10</span>
<span class="t" style="right:432.0px;top:48.8px;transform:scaleX(.93);transform-origin:100% 0">buy</span>
<span class="t" style="right:359.2px;top:48.8px;transform:scaleX(1);transform-origin:100% 0">3.00</span>
<span class="t" style="right:266.3px;top:48.8px;transform:scaleX(.93);transform-origin:100% 0">usdchf</span>
<span class="t" style="right:160.2px;top:48.8px;transform:scaleX(1);transform-origin:100% 0">1.07920</span>
<span class="t" style="right:55.4px;top:48.8px;transform:scaleX(1);transform-origin:100% 0">0.00000</span>
<div class="ab" style="left:0;top:65.6px;width:888px;height:22.2px;background:#c8c8c8"></div>
<svg class="ab" style="left:1.2px;top:68.6px" width="16" height="17" viewBox="0 0 16 17"><rect x="1.2" y="1" width="12.6" height="14.6" rx="2" fill="#fafafa" stroke="#8a8a8a" stroke-width="1.1"/><path d="M7.5 12.5 L11 8.6 L9 8.6 L9 5 L6 5 L6 8.6 L4 8.6 Z" fill="#e84a1a" stroke="#c83810" stroke-width="0.6"/></svg>
<span class="t" style="left:26px;top:70.8px;font-weight:bold;letter-spacing:0.46px">Balance: 48 387.71&nbsp; Equity: 48 202.79&nbsp; Margin: 5 000.00&nbsp; Free margin: 43 202.79&nbsp; Margin level: 964.06%</span>
<div class="ab" style="left:0;top:87.8px;width:888px;height:20.5px;background:#ececec;border-bottom:1px solid #d8d8d8"></div>
<div class="ab" style="left:133.8px;top:87.8px;width:1px;height:20.5px;background:#d8d8d8"></div>
<div class="ab" style="left:363.9px;top:87.8px;width:1px;height:20.5px;background:#d8d8d8"></div>
<div class="ab" style="left:457.9px;top:87.8px;width:1px;height:20.5px;background:#d8d8d8"></div>
<div class="ab" style="left:531.1px;top:87.8px;width:1px;height:20.5px;background:#d8d8d8"></div>
<div class="ab" style="left:624.9px;top:87.8px;width:1px;height:20.5px;background:#d8d8d8"></div>
<div class="ab" style="left:729.5px;top:87.8px;width:1px;height:20.5px;background:#d8d8d8"></div>
<div class="ab" style="left:834.7px;top:87.8px;width:1px;height:20.5px;background:#d8d8d8"></div>
<div class="ab" style="left:627.6px;top:88.2px;width:101.5px;height:19.1px;background:#5ce65c"></div>
<svg class="ab" style="left:1px;top:91.3px" width="18" height="18" viewBox="0 0 18 18"><defs><radialGradient id="b3" cx="0.35" cy="0.3" r="0.7"><stop offset="0" stop-color="#ff9070"/><stop offset="1" stop-color="#e83c10"/></radialGradient></defs><path d="M1.5 1.5 H9.5 L13.5 5.5 V14.5 Q13.5 15.2 12.8 15.2 H2.2 Q1.5 15.2 1.5 14.5Z" fill="#fcfcfc" stroke="#8a8a8a" stroke-width="1.1"/><path d="M9.5 1.5 V5.5 H13.5" fill="none" stroke="#9a9a9a"/><circle cx="12.4" cy="12.8" r="3.9" fill="url(#b3)" stroke="#e83c10" stroke-width="0.5"/></svg>
<span class="t" style="left:25.4px;top:92.8px">2042667</span>
<span class="t" style="right:525.7px;top:92.8px;transform:scaleX(1);transform-origin:100% 0">2010.04.23 16:17</span>
<span class="t" style="right:432.0px;top:92.8px;transform:scaleX(.93);transform-origin:100% 0">sell limit</span>
<span class="t" style="right:359.2px;top:92.8px;transform:scaleX(1);transform-origin:100% 0">4.00</span>
<span class="t" style="right:266.3px;top:92.8px;transform:scaleX(.93);transform-origin:100% 0">usdchf</span>
<span class="t" style="right:160.2px;top:92.8px;transform:scaleX(1);transform-origin:100% 0">1.08059</span>
<span class="t" style="right:55.4px;top:92.8px;transform:scaleX(1);transform-origin:100% 0">0.00000</span>
</div>
<div class="ab" style="left:902.4px;top:657px;width:1.3px;height:140px;background:#333"></div>
<div class="ab" style="left:15px;top:796.5px;width:889px;height:1.2px;background:#3a3a3a"></div>
<div class="ab" style="left:17.7px;top:796.5px;width:52px;height:19.8px;background:#fff;border:1px solid #222;border-top:none"></div>
<span class="t" style="left:28.8px;top:801.5px">Trade</span>
<span class="t" style="left:80.8px;top:801.5px;color:#7c7c7c">Account History</span>
<span class="t" style="left:184.8px;top:801.5px;color:#7c7c7c">Alerts</span>
<span class="t" style="left:237px;top:801.5px;color:#7c7c7c">Mailbox</span>
<span class="t" style="left:298.7px;top:801.5px;color:#7c7c7c">Journal</span>
<div class="ab" style="left:174.9px;top:801px;width:1px;height:13px;background:#7c7c7c"></div>
<div class="ab" style="left:227.3px;top:801px;width:1px;height:13px;background:#7c7c7c"></div>
<div class="ab" style="left:288.7px;top:801px;width:1px;height:13px;background:#7c7c7c"></div>
<div class="ab" style="left:348.5px;top:801px;width:1px;height:13px;background:#7c7c7c"></div>
<div class="ab" style="left:302.5px;top:94.1px;width:575px;height:450px;background:#0733c4;border-radius:7px 7px 0 0;overflow:hidden">
<div class="ab" style="left:0;top:0;width:575px;height:31px;background:linear-gradient(180deg,#3a8ef8 0%,#3d92ff 7%,#0f62ea 16%,#0056dc 40%,#0054dc 55%,#0866f4 78%,#0862f2 88%,#0040cc 94%,#0032b8 100%)"></div>
<span class="t" style="left:6.2px;top:10.2px;color:#fff;font-weight:bold;font-size:14.8px;text-shadow:1px 1px 0 #0a2a8a;transform:scaleX(.885);transform-origin:0 0">Quotes</span>
<div class="ab" style="left:498.2px;top:5.5px;width:22px;height:22px;background:linear-gradient(180deg,#6aa6ff,#2c6ef2 55%,#2058dc);border:1px solid #dce8ff;border-radius:3px"></div>
<div class="ab" style="left:523.5px;top:5.5px;width:22px;height:22px;background:linear-gradient(180deg,#4a8cf8,#2664e8 55%,#1c54d4);border:1px solid #6f9ef2;border-radius:3px"></div>
<div class="ab" style="left:548.5px;top:5.5px;width:22px;height:22px;background:linear-gradient(180deg,#f0a080,#e05a30 55%,#c83e18);border:1px solid #fff;border-radius:3px"></div>
<div class="ab" style="left:502.5px;top:19.4px;width:8px;height:3px;background:#fff"></div>
<div class="ab" style="left:528.5px;top:10.4px;width:12px;height:11px;border:1px solid #7aa4f0;border-top-width:3px"></div>
<svg class="ab" style="left:552.5px;top:9.5px" width="14" height="14" viewBox="0 0 14 14"><path d="M2 2 L12 12 M12 2 L2 12" stroke="#fff" stroke-width="2.2"/></svg>
<div class="ab" style="left:3px;top:31px;width:569px;height:414.7px;background:#ece9d8"></div>
<div class="ab" style="left:2.9px;top:32.7px;width:204.9px;height:389.0px;background:#fff;border:1px solid #a7a6aa;overflow:hidden">
<div class="ab" style="left:0;top:0;width:205px;height:21px;background:#ebeadb;border-bottom:2px solid #d6d2c2"></div>
<div class="ab" style="left:67.3px;top:4px;width:1px;height:14px;background:#c7c5b2"></div>
<div class="ab" style="left:133.0px;top:4px;width:1px;height:14px;background:#c7c5b2"></div>
<span class="t" style="left:10.6px;top:5.5px">Symbol</span>
<span class="t" style="left:78.6px;top:5.5px">Bid</span>
<span class="t" style="left:144.6px;top:5.5px">Ask</span>
<div class="ab" style="left:0;top:21.7px;width:185px;height:345.9px;overflow:hidden">
<div class="ab" style="left:0;top:0.00px;width:185px;height:15.25px;border-bottom:1px solid #f0eee2"></div>
<span class="t k2" style="left:7.5px;top:2.00px;color:#1a1a1a">EUR/CAD</span>
<span class="t k2" style="left:75.9px;top:2.00px;color:#1a1a1a">1,33465</span>
<span class="t k2" style="left:141.3px;top:2.00px;color:#1a1a1a">1,33485</span>
<div class="ab" style="left:0;top:15.25px;width:185px;height:15.25px;border-bottom:1px solid #f0eee2"></div>
<span class="t k2" style="left:7.5px;top:17.25px;color:#1a1a1a">EUR/CHF</span>
<span class="t k2" style="left:75.9px;top:17.25px;color:#1a1a1a">1,43355</span>
<span class="t k2" style="left:141.3px;top:17.25px;color:#1a1a1a">1,43370</span>
<div class="ab" style="left:0;top:30.50px;width:185px;height:15.25px;border-bottom:1px solid #f0eee2"></div>
<span class="t k2" style="left:7.5px;top:32.50px;color:#1a1a1a">EUR/GBP</span>
<span class="t k2" style="left:75.9px;top:32.50px;color:#1a1a1a">0,86735</span>
<span class="t k2" style="left:141.3px;top:32.50px;color:#1a1a1a">0,86740</span>
<div class="ab" style="left:0;top:45.75px;width:185px;height:15.25px;border-bottom:1px solid #f0eee2"></div>
<span class="t k2" style="left:7.5px;top:47.75px;color:#1a1a1a">EUR/JPY</span>
<span class="t k2" style="left:75.9px;top:47.75px;color:#1a1a1a">124,985</span>
<span class="t k2" style="left:141.3px;top:47.75px;color:#1a1a1a">125,000</span>
<div class="ab" style="left:0;top:61.00px;width:185px;height:15.25px;border-bottom:1px solid #f0eee2"></div>
<span class="t k2" style="left:7.5px;top:63.00px;color:#1a1a1a">EUR/NOK</span>
<span class="t k2" style="left:75.9px;top:63.00px;color:#1a1a1a">7,87590</span>
<span class="t k2" style="left:141.3px;top:63.00px;color:#1a1a1a">7,87750</span>
<div class="ab" style="left:0;top:76.25px;width:185px;height:15.25px;border-bottom:1px solid #f0eee2"></div>
<span class="t k2" style="left:7.5px;top:78.25px;color:#1a1a1a">EUR/NZD</span>
<span class="t k2" style="left:75.9px;top:78.25px;color:#1a1a1a">1,86810</span>
<span class="t k2" style="left:141.3px;top:78.25px;color:#1a1a1a">1,86880</span>
<div class="ab" style="left:0;top:91.50px;width:185px;height:15.25px;border-bottom:1px solid #f0eee2"></div>
<span class="t k2" style="left:7.5px;top:93.50px;color:#1a1a1a">EUR/SEK</span>
<span class="t k2" style="left:75.9px;top:93.50px;color:#1a1a1a">9,59020</span>
<span class="t k2" style="left:141.3px;top:93.50px;color:#1a1a1a">9,59220</span>
<div class="ab" style="left:0;top:106.75px;width:185px;height:15.25px;border-bottom:1px solid #f0eee2"></div>
<span class="t k2" style="left:7.5px;top:108.75px;color:#1a1a1a">EUR/USD</span>
<span class="t k2" style="left:75.9px;top:108.75px;color:#1a1a1a">1,32735</span>
<span class="t k2" style="left:141.3px;top:108.75px;color:#1a1a1a">1,32740</span>
<div class="ab" style="left:0;top:122.00px;width:185px;height:15.25px;border-bottom:1px solid #f0eee2"></div>
<span class="t k2" style="left:7.5px;top:124.00px;color:#1a1a1a">GBP/AUD</span>
<span class="t k2" style="left:75.9px;top:124.00px;color:#1a1a1a">1,66425</span>
<span class="t k2" style="left:141.3px;top:124.00px;color:#1a1a1a">1,66470</span>
<div class="ab" style="left:0;top:137.25px;width:185px;height:15.25px;border-bottom:1px solid #f0eee2"></div>
<span class="t k2" style="left:7.5px;top:139.25px;color:#1a1a1a">GBP/CAD</span>
<span class="t k2" style="left:75.9px;top:139.25px;color:#1a1a1a">1,53855</span>
<span class="t k2" style="left:141.3px;top:139.25px;color:#1a1a1a">1,53895</span>
<div class="ab" style="left:0;top:152.50px;width:185px;height:15.25px;border-bottom:1px solid #f0eee2"></div>
<span class="t k2" style="left:7.5px;top:154.50px;color:#1a1a1a">GBP/CHF</span>
<span class="t k2" style="left:75.9px;top:154.50px;color:#1a1a1a">1,65265</span>
<span class="t k2" style="left:141.3px;top:154.50px;color:#1a1a1a">1,65300</span>
<div class="ab" style="left:0;top:167.75px;width:185px;height:15.25px;border-bottom:1px solid #f0eee2"></div>
<span class="t k2" style="left:7.5px;top:169.75px;color:#1a1a1a">GBP/JPY</span>
<span class="t k2" style="left:75.9px;top:169.75px;color:#1a1a1a">144,085</span>
<span class="t k2" style="left:141.3px;top:169.75px;color:#1a1a1a">144,110</span>
<div class="ab" style="left:0;top:183.00px;width:185px;height:15.25px;border-bottom:1px solid #f0eee2"></div>
<span class="t k2" style="left:7.5px;top:185.00px;color:#1a1a1a">GBP/NZD</span>
<span class="t k2" style="left:75.9px;top:185.00px;color:#1a1a1a">2,15350</span>
<span class="t k2" style="left:141.3px;top:185.00px;color:#1a1a1a">2,15445</span>
<div class="ab" style="left:0;top:198.25px;width:185px;height:15.25px;border-bottom:1px solid #f0eee2"></div>
<span class="t k2" style="left:7.5px;top:200.25px;color:#1a1a1a">GBP/USD</span>
<span class="t k2" style="left:75.9px;top:200.25px;color:#1a1a1a">1,53025</span>
<span class="t k2" style="left:141.3px;top:200.25px;color:#1a1a1a">1,53030</span>
<div class="ab" style="left:0;top:213.50px;width:185px;height:15.25px;border-bottom:1px solid #f0eee2"></div>
<span class="t k2" style="left:7.5px;top:215.50px;color:#1a1a1a">NZD/CAD</span>
<span class="t k2" style="left:75.9px;top:215.50px;color:#1a1a1a">0,71420</span>
<span class="t k2" style="left:141.3px;top:215.50px;color:#1a1a1a">0,71460</span>
<div class="ab" style="left:0;top:228.75px;width:185px;height:15.25px;border-bottom:1px solid #f0eee2"></div>
<span class="t k2" style="left:7.5px;top:230.75px;color:#1a1a1a">NZD/CHF</span>
<span class="t k2" style="left:75.9px;top:230.75px;color:#1a1a1a">0,76715</span>
<span class="t k2" style="left:141.3px;top:230.75px;color:#1a1a1a">0,76750</span>
<div class="ab" style="left:0;top:244.00px;width:185px;height:15.25px;border-bottom:1px solid #f0eee2"></div>
<span class="t k2" style="left:7.5px;top:246.00px;color:#1a1a1a">NZD/JPY</span>
<span class="t k2" style="left:75.9px;top:246.00px;color:#1a1a1a">66,88500</span>
<span class="t k2" style="left:141.3px;top:246.00px;color:#1a1a1a">66,9150</span>
<div class="ab" style="left:0;top:259.25px;width:185px;height:15.25px;border-bottom:1px solid #f0eee2"></div>
<span class="t k2" style="left:7.5px;top:261.25px;color:#1a1a1a">NZD/USD</span>
<span class="t k2" style="left:75.9px;top:261.25px;color:#1a1a1a">0,71035</span>
<span class="t k2" style="left:141.3px;top:261.25px;color:#1a1a1a">0,71060</span>
<div class="ab" style="left:0;top:274.50px;width:185px;height:15.25px;border-bottom:1px solid #f0eee2"></div>
<span class="t k2" style="left:7.5px;top:276.50px;color:#1a1a1a">USD/CAD</span>
<span class="t k2" style="left:75.9px;top:276.50px;color:#1a1a1a">1,00545</span>
<span class="t k2" style="left:141.3px;top:276.50px;color:#1a1a1a">1,00560</span>
<div class="ab" style="left:0;top:289.75px;width:185px;height:15.25px;border-bottom:1px solid #f0eee2"></div>
<div class="ab" style="left:6.6px;top:291.25px;width:62.7px;height:12.75px;background:#316ac5"></div>
<div class="ab" style="left:70.3px;top:291.25px;width:64.3px;height:12.75px;background:#316ac5"></div>
<div class="ab" style="left:135.6px;top:291.25px;width:49.4px;height:12.75px;background:#316ac5"></div>
<span class="t k2" style="left:7.5px;top:291.75px;color:#fff">USD/CHF</span>
<span class="t k2" style="left:75.9px;top:291.75px;color:#fff">1,08000</span>
<span class="t k2" style="left:141.3px;top:291.75px;color:#fff">1,08010</span>
<div class="ab" style="left:0;top:305.00px;width:185px;height:15.25px;border-bottom:1px solid #f0eee2"></div>
<span class="t k2" style="left:7.5px;top:307.00px;color:#1a1a1a">USD/JPY</span>
<span class="t k2" style="left:75.9px;top:307.00px;color:#1a1a1a">94,160</span>
<span class="t k2" style="left:141.3px;top:307.00px;color:#1a1a1a">94,170</span>
<div class="ab" style="left:0;top:320.25px;width:185px;height:15.25px;border-bottom:1px solid #f0eee2"></div>
<span class="t k2" style="left:7.5px;top:322.25px;color:#1a1a1a">USD/NOK</span>
<span class="t k2" style="left:75.9px;top:322.25px;color:#1a1a1a">5,93390</span>
<span class="t k2" style="left:141.3px;top:322.25px;color:#1a1a1a">5,93455</span>
<div class="ab" style="left:0;top:335.50px;width:185px;height:15.25px;border-bottom:1px solid #f0eee2"></div>
<span class="t k2" style="left:7.5px;top:337.50px;color:#1a1a1a">USD/SEK</span>
<span class="t k2" style="left:75.9px;top:337.50px;color:#1a1a1a">7,22355</span>
<span class="t k2" style="left:141.3px;top:337.50px;color:#1a1a1a">7,22550</span>
<div class="ab" style="left:69.3px;top:0;width:1px;height:400px;background:#f0eee2"></div>
<div class="ab" style="left:134.6px;top:0;width:1px;height:400px;background:#f0eee2"></div>
</div>
<div class="ab" style="left:185.1px;top:0;width:17px;height:369.2px;background:#f4f3ee"></div>
<div class="ab" style="left:186.1px;top:1.0px;width:14.5px;height:16.6px;background:linear-gradient(180deg,#d6e3fd,#b6cbf7);border:1px solid #a9bde8;border-radius:2px"></div>
<svg class="ab" style="left:188.1px;top:5.2px" width="10" height="8" viewBox="0 0 10 8"><path d="M1.5 6 L5 2.5 L8.5 6" stroke="#4d6185" stroke-width="2" fill="none"/></svg>
<div class="ab" style="left:186.1px;top:113.2px;width:14.5px;height:225.4px;background:linear-gradient(90deg,#c8d8fb,#b8cdf8);border:1px solid #a9bde8;border-radius:2px"></div>
<div class="ab" style="left:189.1px;top:222.2px;width:8px;height:1px;background:#e8effe;box-shadow:0 2px 0 #e8effe,0 4px 0 #e8effe,0 6px 0 #e8effe"></div>
<div class="ab" style="left:186.1px;top:350.6px;width:14.5px;height:16.9px;background:linear-gradient(180deg,#d6e3fd,#b6cbf7);border:1px solid #a9bde8;border-radius:2px"></div>
<svg class="ab" style="left:188.1px;top:355.2px" width="10" height="8" viewBox="0 0 10 8"><path d="M1.5 2 L5 5.5 L8.5 2" stroke="#4d6185" stroke-width="2" fill="none"/></svg>
<div class="ab" style="left:0;top:368.7px;width:185.1px;height:18px;background:#f4f3ee"></div>
<div class="ab" style="left:185.1px;top:368.7px;width:20px;height:20px;background:#ece9d8"></div>
<div class="ab" style="left:1.8px;top:369.9px;width:15px;height:15.5px;background:linear-gradient(180deg,#d6e3fd,#b6cbf7);border:1px solid #a9bde8;border-radius:2px"></div>
<svg class="ab" style="left:4.6px;top:373.2px" width="9" height="10" viewBox="0 0 9 10"><path d="M6.5 1.5 L3 5 L6.5 8.5" stroke="#4d6185" stroke-width="2" fill="none"/></svg>
<div class="ab" style="left:20.6px;top:369.9px;width:132.0px;height:15.5px;background:linear-gradient(180deg,#d0defc,#b8cdf8);border:1px solid #a9bde8;border-radius:2px"></div>
<div class="ab" style="left:82.6px;top:374.2px;width:1px;height:7px;background:#eef3fe;box-shadow:2px 0 0 #eef3fe,4px 0 0 #eef3fe,6px 0 0 #eef3fe"></div>
<div class="ab" style="left:166.1px;top:369.9px;width:16.5px;height:15.5px;background:linear-gradient(180deg,#d6e3fd,#b6cbf7);border:1px solid #a9bde8;border-radius:2px"></div>
<svg class="ab" style="left:169.6px;top:373.2px" width="9" height="10" viewBox="0 0 9 10"><path d="M2.5 1.5 L6 5 L2.5 8.5" stroke="#4d6185" stroke-width="2" fill="none"/></svg>
</div>
<span class="t" style="left:222.0px;top:45.7px;font-size:29px;letter-spacing:1.85px">USD/CHF</span>
<div class="ab" style="left:215.3px;top:78.5px;width:354.8px;height:343.2px;background:#fff;border:1px solid #86a0c2;overflow:hidden">
<div class="ab" style="left:0;top:0;width:360px;height:22.5px;background:#ebeadb;border-bottom:2px solid #d6d2c2"></div>
<div class="ab" style="left:82.9px;top:4px;width:1px;height:15px;background:#c7c5b2"></div>
<div class="ab" style="left:170.2px;top:4px;width:1px;height:15px;background:#c7c5b2"></div>
<div class="ab" style="left:259.6px;top:4px;width:1px;height:15px;background:#c7c5b2"></div>
<div class="ab" style="left:353.0px;top:4px;width:1px;height:15px;background:#c7c5b2"></div>
<span class="t" style="left:11.2px;top:6px">Volume</span>
<span class="t" style="left:95.2px;top:6px">Bid</span>
<span class="t" style="left:180.1px;top:6px">Ask</span>
<span class="t" style="left:269.5px;top:6px">Volume</span>
<div class="ab" style="left:0;top:36.8px;width:360px;height:1px;background:#f0eee2"></div>
<div class="ab" style="left:0;top:52.1px;width:360px;height:1px;background:#f0eee2"></div>
<div class="ab" style="left:0;top:67.4px;width:360px;height:1px;background:#f0eee2"></div>
<div class="ab" style="left:0;top:82.8px;width:360px;height:1px;background:#f0eee2"></div>
<div class="ab" style="left:0;top:98.1px;width:360px;height:1px;background:#f0eee2"></div>
<div class="ab" style="left:0;top:113.4px;width:360px;height:1px;background:#f0eee2"></div>
<div class="ab" style="left:0;top:128.7px;width:360px;height:1px;background:#f0eee2"></div>
<div class="ab" style="left:0;top:144.0px;width:360px;height:1px;background:#f0eee2"></div>
<div class="ab" style="left:0;top:159.4px;width:360px;height:1px;background:#f0eee2"></div>
<div class="ab" style="left:0;top:174.7px;width:360px;height:1px;background:#f0eee2"></div>
<div class="ab" style="left:0;top:190.0px;width:360px;height:1px;background:#f0eee2"></div>
<div class="ab" style="left:0;top:205.3px;width:360px;height:1px;background:#f0eee2"></div>
<div class="ab" style="left:0;top:220.6px;width:360px;height:1px;background:#f0eee2"></div>
<div class="ab" style="left:0;top:236.0px;width:360px;height:1px;background:#f0eee2"></div>
<div class="ab" style="left:0;top:251.3px;width:360px;height:1px;background:#f0eee2"></div>
<div class="ab" style="left:0;top:266.6px;width:360px;height:1px;background:#f0eee2"></div>
<div class="ab" style="left:0;top:281.9px;width:360px;height:1px;background:#f0eee2"></div>
<div class="ab" style="left:0;top:297.2px;width:360px;height:1px;background:#f0eee2"></div>
<div class="ab" style="left:0;top:312.6px;width:360px;height:1px;background:#f0eee2"></div>
<div class="ab" style="left:0;top:327.9px;width:360px;height:1px;background:#f0eee2"></div>
<div class="ab" style="left:84.9px;top:22.5px;width:1px;height:330px;background:#f0eee2"></div>
<div class="ab" style="left:170.2px;top:22.5px;width:1px;height:330px;background:#f0eee2"></div>
<div class="ab" style="left:259.6px;top:22.5px;width:1px;height:330px;background:#f0eee2"></div>
<span class="t" style="left:9.7px;top:25px">1</span>
<span class="t" style="left:92.7px;top:25px">1,08000</span>
<span class="t" style="left:177.2px;top:25px">1,08010</span>
<span class="t" style="left:267.2px;top:25px">2,4</span>
</div>
<span class="t" style="left:19.1px;top:426.9px">Margin: 9000</span>
<span class="t" style="left:490.5px;top:426.9px">Connected</span>
</div>
</body></html>
